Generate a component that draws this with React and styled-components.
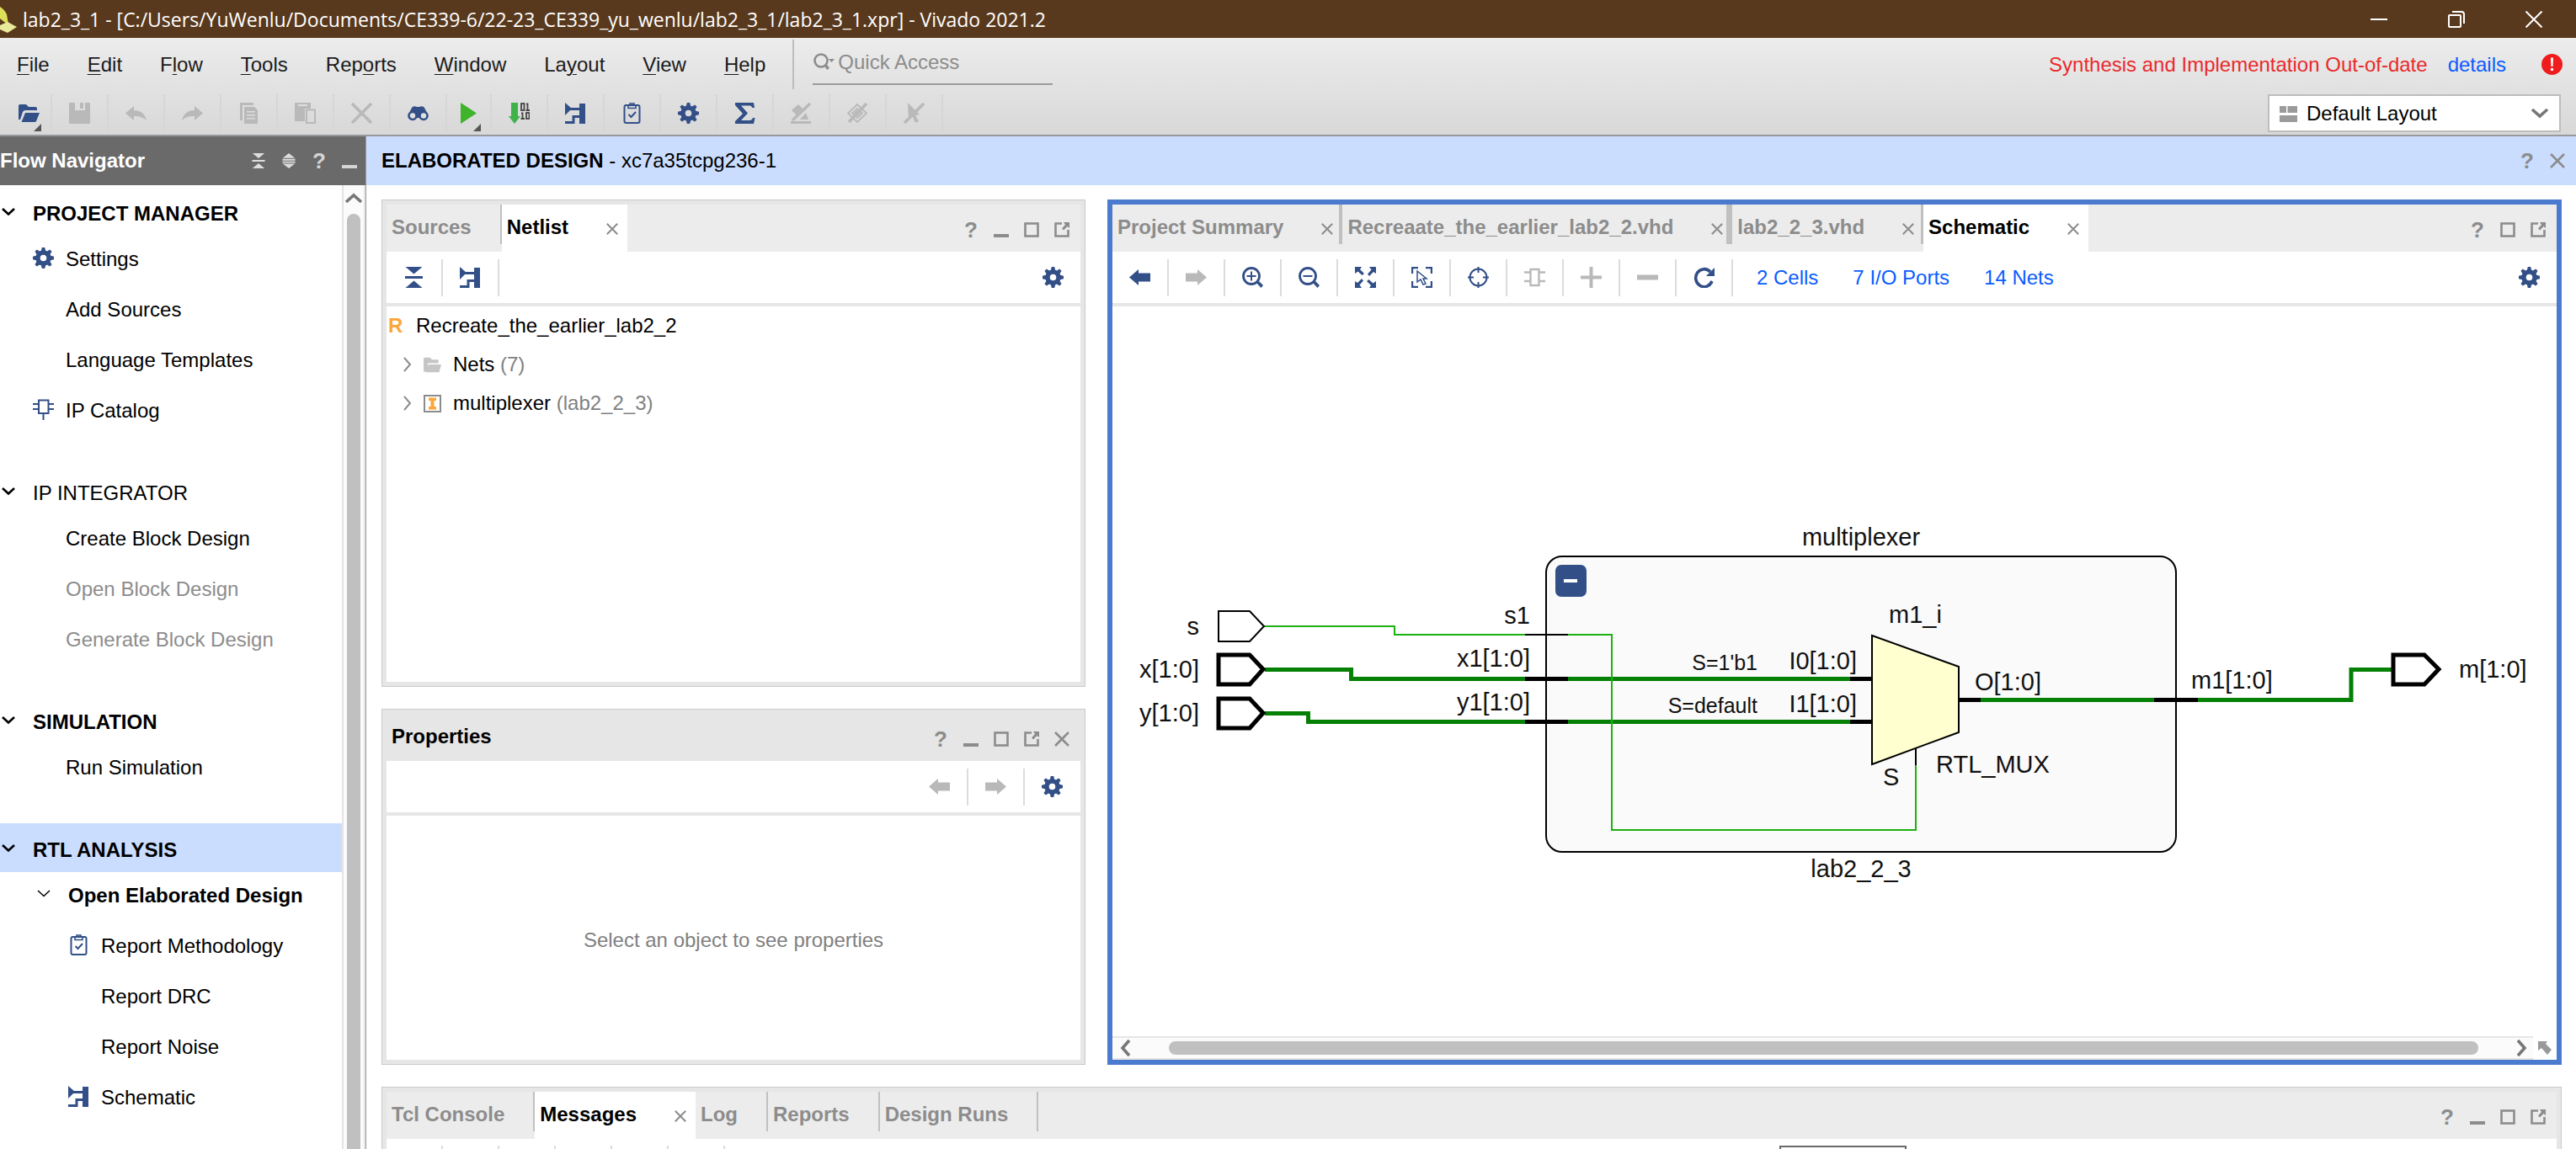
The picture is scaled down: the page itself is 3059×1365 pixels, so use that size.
import React from "react";
import styled, { createGlobalStyle, css } from "styled-components";

const navy = "#324f87";
const dim = "#b9b9b9";
const grey = "#8c8c8c";

const Global = createGlobalStyle`
  * { box-sizing: border-box; }
  body {
    margin: 0;
    overflow: hidden;
    background: #fff;
    color: #000;
    font: 24px/28px "Liberation Sans", Arial, sans-serif;
  }
  button, input, select { font: inherit; color: inherit; }
  button { border: 0; padding: 0; background: none; }
  a { text-decoration: none; }
  svg { display: block; flex: none; }
  h1, h2, ul { margin: 0; padding: 0; font-size: 24px; font-weight: normal; list-style: none; }
`;

/* ---------- icons ---------- */

const Icon = ({ children, size = 25, box = 25, height, color = navy }) => (
  <svg width={size} height={height || size} viewBox={`0 0 ${box} ${height ? height : box}`}
    fill={color} stroke={color} strokeWidth="0" aria-hidden="true">
    {children}
  </svg>
);

const Gear = () => (
  <Icon>
    <circle cx="12.5" cy="12.5" r="6.5" fill="none" strokeWidth="5.4" />
    {[0, 45, 90, 135, 180, 225, 270, 315].map((a) => (
      <path key={a} d="M9.6 5 L10.8 0 H14.2 L15.4 5 Z" transform={`rotate(${a} 12.5 12.5)`} />
    ))}
  </Icon>
);
const SchematicIcon = () => (
  <Icon>
    <path d="M0 0 L8 7 L0 15 Z M17 1 H24 V25 H17 Z" />
    <path d="M6 7.5 H18 M0 23.5 H10 V16.5 H18" fill="none" strokeWidth="3" />
  </Icon>
);
const Clipboard = () => (
  <Icon>
    <rect x="3.5" y="3" width="18" height="21" rx="2" fill="none" strokeWidth="2" />
    <path d="M8 3 V6.5 H17 V3 M10 3 V1 H15 V3" fill="none" strokeWidth="1.6" />
    <path d="M8.5 14 L11.5 17 L17 11" fill="none" strokeWidth="2" />
  </Icon>
);
const OpenFolder = ({ color }) => (
  <Icon color={color}>
    <path d="M0 20 V4 Q0 2 2 2 H9 L12 5 H20 Q22 5 22 7 V9 H8 Q6 9 5 11 L2 20 Z" />
    <path d="M8 12 H25 L21 22 Q20.500 23 19 23 H3.500 Z" />
  </Icon>
);
const Save = () => (
  <Icon color={dim}><path fillRule="evenodd" d="M0 0 H25 V25 H0 Z M7 0 V9 H19 V0 H17 V7 H13 V0 Z" /></Icon>
);
const Undo = () => (
  <Icon color={dim}><path d="M0 12.500 L10 4 V9 Q22 9 25 21 Q19 15.500 10 16 V21 Z" /></Icon>
);
const Redo = () => (
  <Icon color={dim}><path d="M25 12.500 L15 4 V9 Q3 9 0 21 Q6 15.500 15 16 V21 Z" /></Icon>
);
const Copy = () => (
  <Icon color={dim}>
    <path d="M2 0 H18 V3 H5 V21 H2 Z" />
    <path fillRule="evenodd" d="M7 5 H19 L23 9 V25 H7 Z M10 10 V11.500 H20 V10 Z M10 14 V15.500 H20 V14 Z M10 18 V19.500 H20 V18 Z" />
  </Icon>
);
const Paste = () => (
  <Icon color={dim}>
    <path fillRule="evenodd" d="M0 0 H19 V7 H12 V22 H0 Z M4 2 V4 H15 V2 Z" />
    <rect x="14" y="8.500" width="10" height="15.500" fill="none" strokeWidth="2" />
  </Icon>
);
const Delete = () => (
  <Icon color={dim}><path d="M1 1 L24 24 M24 1 L1 24" fill="none" strokeWidth="3.500" /></Icon>
);
const Binoculars = () => (
  <Icon>
    <path d="M1 14 L5 6 Q7 3 11 5 H14 Q18 3 20 6 L24 14 V18 H1 Z" />
    <circle cx="6" cy="15.500" r="4.500" fill="#e0e0e0" strokeWidth="2.600" />
    <circle cx="19" cy="15.500" r="4.500" fill="#e0e0e0" strokeWidth="2.600" />
  </Icon>
);
const Play = () => <Icon color="#3fb329"><path d="M3 0 L22 12.500 L3 25 Z" /></Icon>;
const Bitstream = () => (
  <Icon color="#3fb34a">
    <path d="M3 0 H11 V16 H14 L7 25 L0 16 H3 Z" />
    <g stroke="#444" fill="none" strokeWidth="1.800">
      <rect x="15" y="1" width="3.500" height="8" />
      <path d="M21 1.500 H22.500 V9 M20.500 9 H25" />
      <path d="M15 12.500 H16.500 V19 M14.500 19 H19" />
      <rect x="21" y="12" width="3.500" height="7" />
    </g>
  </Icon>
);
const Sigma = () => (
  <Icon><path d="M1 0 H23 L24 6 H21 Q21 3.500 18 3.500 H8 L16 12.500 L8 21 H18 Q21 21 22 18 H24.500 L23 25 H1 V22 L10 13 L1 3 Z" /></Icon>
);
const NoMark = () => (
  <Icon color={dim}>
    <path d="M9 2 L15 8 L8 16 L1 9 Z M18 12 L21 20 H11 Z M0 22 H24 V25 H0 Z" />
    <path d="M23 1 L2 21" fill="none" strokeWidth="3.500" />
  </Icon>
);
const NoHighlight = () => (
  <Icon color={dim}>
    <path d="M12 2 L23 12.500 L12 23 L1 12.500 Z M12 7 L18 12.500 L12 18 L6 12.500 Z" fill="none" strokeWidth="1.800" />
    <path d="M12 9 L16 12.500 L12 16 L8 12.500 Z" />
    <path d="M23 1 L2 23" fill="none" strokeWidth="3.500" />
  </Icon>
);
const NoSelect = () => (
  <Icon color={dim}>
    <path d="M5 0 L19 14 L14 15 L18 22 L14 24 L11 17 L6 20 Z" />
    <path d="M24 1 L1 24" fill="none" strokeWidth="3.500" />
  </Icon>
);
const Collapse = ({ color, size }) => (
  <Icon color={color} size={size}><path d="M2.500 0 H22.500 L12.500 8.500 Z M2 11 H23 V14 H2 Z M2.500 25 H22.500 L12.500 16.500 Z" /></Icon>
);
const Expand = ({ color, size }) => (
  <Icon color={color} size={size}><path d="M2.500 8 H22.500 L12.500 0 Z M2 9.500 H23 V12 H2 Z M2 13.500 H23 V16 H2 Z M2.500 17.500 H22.500 L12.500 25 Z" /></Icon>
);
const Minimise = ({ color = grey }) => <Icon color={color} size={18} box={18}><path d="M0 14 H18 V18 H0 Z" /></Icon>;
const Maximise = () => (
  <Icon color={grey} size={18} box={18}><rect x="1.500" y="1.500" width="15" height="15" fill="none" strokeWidth="2.600" /></Icon>
);
const PopOut = () => (
  <Icon color={grey} size={18} box={18}>
    <path d="M9 1.500 H1.500 V16.500 H16.500 V9" fill="none" strokeWidth="2.600" />
    <path d="M11 0 H18 V7 L15.500 5 L11 9.500 L9 7.500 L13 3 Z" />
  </Icon>
);
const Close = ({ size = 14 }) => (
  <Icon color={grey} size={size} box={14}><path d="M0.800 0.800 L13.200 13.200 M13.200 0.800 L0.800 13.200" fill="none" strokeWidth="2" /></Icon>
);
const ArrowLeft = ({ color }) => <Icon color={color}><path d="M0 12.500 L11 3 V7.500 H25 V17.500 H11 V22 Z" /></Icon>;
const ArrowRight = ({ color }) => <Icon color={color}><path d="M25 12.500 L14 3 V7.500 H0 V17.500 H14 V22 Z" /></Icon>;
const Zoom = ({ plus }) => (
  <Icon>
    <circle cx="11" cy="11" r="9.500" fill="none" strokeWidth="2.800" />
    <path d={plus ? "M5.500 11 H16.500 M11 5.500 V16.500" : "M5.500 11 H16.500"} fill="none" strokeWidth="2" />
    <path d="M17 19 L20 17 L25 22 L22.500 25 Z" />
  </Icon>
);
const Fit = () => (
  <Icon>
    {[0, 90, 180, 270].map((a) => (
      <path key={a} d="M0 0 H8 L6 3 L11 8 L8.500 10 L3.500 5.500 L0 8 Z" transform={`rotate(${a} 12.500 12.500)`} />
    ))}
  </Icon>
);
const SelectArea = () => (
  <Icon>
    <path d="M1 8 V1 H8 M17 1 H24 V8 M24 17 V24 H17 M8 24 H1 V17" fill="none" strokeWidth="2.400" />
    <path d="M7 5 L18 14 H14 L17 20 L14 21 L11 15 L7 18 Z" fill="#fff" strokeWidth="1.500" />
  </Icon>
);
const Target = () => (
  <Icon>
    <circle cx="12.500" cy="12.500" r="10" fill="none" strokeWidth="2" />
    <path d="M12.500 0 V7 M12.500 18 V25 M0 12.500 H7 M18 12.500 H25" fill="none" strokeWidth="2" />
  </Icon>
);
const Cell = () => (
  <Icon color={dim}>
    <path d="M7.500 3 H17.500 V22 H7.500 Z M0 6.500 H7 M0 17 H7 M18 6.500 H25 M18 17 H25" fill="none" strokeWidth="2.400" />
  </Icon>
);
const Plus = () => <Icon color={dim}><path d="M0 10.500 H10.500 V0 H14.500 V10.500 H25 V14.500 H14.500 V25 H10.500 V14.500 H0 Z" /></Icon>;
const Minus = () => <Icon color={dim}><path d="M0 9.500 H25 V15.500 H0 Z" /></Icon>;
const Refresh = () => (
  <Icon>
    <path d="M20 6 A10 10.500 0 1 0 22 17" fill="none" strokeWidth="3.600" />
    <path d="M25 1 V11 H15 Z" />
  </Icon>
);
const IpIcon = () => (
  <Icon>
    <path d="M7 1.500 H18.500 V17 H7 Z M0 6 H7 M0 12 H7 M18.500 6 H25 M18.500 12 H25 M12.500 17 V25" fill="none" strokeWidth="2" />
  </Icon>
);
const Chevron = ({ thin }) => (
  <Icon size={18} box={18} color="#000">
    <path d="M2 5 L9 11.500 L16 5" fill="none" strokeWidth={thin ? 1.500 : 2.600} />
  </Icon>
);
const ChevronRight = () => (
  <Icon size={18} box={18} color={grey}><path d="M5 1 L12 9 L5 17" fill="none" strokeWidth="2" /></Icon>
);
const Arrowhead = ({ turn = 0 }) => (
  <Icon size={22} box={22} color="#777">
    <path d="M2 16 L11 8 L20 16" fill="none" strokeWidth="3.600" transform={`rotate(${turn} 11 11)`} />
  </Icon>
);
const InstanceIcon = () => (
  <Icon size={21} box={21} color={grey}>
    <rect x="1" y="1" width="19" height="19" fill="#fff" strokeWidth="2" />
    <path d="M6 3.500 H15 V7 H12.500 V14 H15 V17.500 H6 V14 H8.500 V7 H6 Z" fill="#fca636" />
  </Icon>
);
const Logo = () => (
  <svg width="21" height="36" viewBox="0 0 21 36" aria-hidden="true">
    <path d="M0 3 Q5 6 8 12 L10 24 L5 21 L0 17 Z" fill="#dfe05a" />
    <path d="M0 25 L9 21 L20 27 L9 34 L0 30 Z" fill="#e9ea9a" />
  </svg>
);

/* ---------- window frame ---------- */

const Window = styled.div`
  display: flex;
  flex-direction: column;
  height: 100vh;
`;
const TitleBar = styled.header`
  flex: none;
  display: flex;
  align-items: center;
  gap: 6px;
  height: 45px;
  background: #59391d;
  color: #fff;
`;
const Title = styled.h1`
  flex: 1;
  font: 23px/30px "Open Sans", "Noto Sans", sans-serif;
`;
const WindowControls = styled.div`
  display: flex;
  gap: 70px;
  padding-right: 38px;
  button { width: 22px; height: 22px; }
`;
const TopBars = styled.div`
  flex: none;
  height: 117px;
  border-bottom: 2px solid #95999b;
  background: linear-gradient(#ececec, #d8d8d8);
`;
const MenuRow = styled.div`
  display: flex;
  align-items: center;
  height: 63px;
  padding: 0 16px 0 20px;
`;
const Menu = styled.nav`
  display: flex;
  gap: 45px;
  padding-right: 32px;
  color: #1a1a1a;
  u { text-decoration-thickness: 1px; text-underline-offset: 3px; }
`;
const MenuDivider = styled.span`
  align-self: stretch;
  width: 2px;
  margin: 2px 22px 2px 0;
  background: #bdbdbd;
`;
const Search = styled.label`
  display: flex;
  align-items: center;
  gap: 4px;
  width: 285px;
  height: 48px;
  padding-bottom: 4px;
  border-bottom: 2px solid #9b9b9b;
  input {
    width: 240px;
    border: 0;
    padding: 0;
    outline: 0;
    background: none;
  }
  input::placeholder { color: ${grey}; opacity: 1; }
`;
const Status = styled.div`
  display: flex;
  align-items: center;
  gap: 24px;
  margin-left: auto;
  color: #ea2a2a;
  svg { margin-left: 18px; }
`;
const Link = styled.a`color: #0a5cff;`;

const ToolRow = styled.div`
  display: flex;
  height: 50px;
  padding: 4px 18px 0 0;
`;
const Tool = styled.button`
  position: relative;
  display: flex;
  align-items: center;
  justify-content: center;
  width: ${(p) => p.$width || 67}px;
  height: 44px;
  padding-left: ${(p) => p.$pad || 0}px;
  border-right: 2px solid ${(p) => p.$line || "#d6d6d6"};
`;
const Corner = styled.span`
  position: absolute;
  right: 11px;
  bottom: 0;
  border-left: 9px solid transparent;
  border-bottom: 9px solid #555;
`;
const LayoutPicker = styled.label`
  position: relative;
  display: flex;
  align-items: center;
  width: 348px;
  height: 45px;
  margin-left: auto;
  select {
    width: 100%;
    height: 100%;
    padding: 0 0 0 44px;
    border: 2px solid #bdbdbd;
    border-radius: 0;
    background: #fff;
    color: #000;
    appearance: none;
  }
  svg { position: absolute; left: 14px; pointer-events: none; }
  svg:last-child { left: auto; right: 14px; }
`;

const Body = styled.div`
  flex: 1;
  display: flex;
  min-height: 0;
`;

/* ---------- flow navigator ---------- */

const Sidebar = styled.aside`
  flex: none;
  display: flex;
  flex-direction: column;
  width: 435px;
  border-right: 1px solid #999;
`;
const SidebarHead = styled.div`
  flex: none;
  display: flex;
  align-items: center;
  gap: 18px;
  height: 58px;
  padding-right: 10px;
  background: #6a6a6a;
  color: #fff;
  h2 { flex: 1; font-weight: bold; }
`;
const HelpButton = styled.button`
  width: 18px;
  font-weight: bold;
  font-size: 26px;
  color: ${(p) => p.$color || grey};
`;
const SidebarBody = styled.div`
  flex: 1;
  display: flex;
  min-height: 0;
  overflow: hidden;
`;
const Tree = styled.nav`flex: 1; padding-top: 2px;`;
const Section = styled.section`margin-bottom: 34px;`;
const row = css`
  display: flex;
  align-items: center;
  width: 100%;
  text-align: left;
  svg { margin-bottom: 4px; }
`;
const SectionHead = styled.button`
  ${row}
  height: 58px;
  gap: 20px;
  padding: 6px 0 0 1px;
  font-weight: ${(p) => (p.$bold ? "bold" : "normal")};
  background: ${(p) => (p.$active ? "#cbddff" : "none")};
`;
const Item = styled.button`
  ${row}
  height: 60px;
  padding: 0 0 4px ${(p) => (p.$deep ? 81 : 39)}px;
  color: ${(p) => (p.disabled ? grey : "#000")};
`;
const IconSlot = styled.span`
  display: flex;
  width: 39px;
`;
const SubHead = styled.button`
  ${row}
  height: 60px;
  gap: 20px;
  padding: 0 0 4px 43px;
  font-weight: bold;
`;
const VScroll = styled.div`
  display: flex;
  flex-direction: column;
  align-items: center;
  width: 28px;
  padding-top: 4px;
  border: solid #e4e4e4;
  border-width: 0 2px;
  background: #fbfbfb;
  &::after {
    content: "";
    flex: 1;
    width: 16px;
    margin-top: 8px;
    border-radius: 8px 8px 0 0;
    background: #c0c0c0;
  }
`;

/* ---------- work area ---------- */

const Main = styled.main`
  flex: 1;
  display: flex;
  flex-direction: column;
  min-width: 0;
`;
const DesignHead = styled.div`
  flex: none;
  display: flex;
  align-items: center;
  gap: 18px;
  height: 58px;
  padding: 0 13px 0 18px;
  background: #cbddff;
  h2 { flex: 1; }
`;
const Workspace = styled.div`
  flex: 1;
  display: flex;
  flex-direction: column;
  gap: 26px;
  min-height: 0;
  padding: 17px 17px 0 18px;
`;
const Upper = styled.div`
  flex: 1;
  display: grid;
  grid-template-columns: 836fr 1727fr;
  gap: 26px;
  min-height: 0;
`;
const LeftColumn = styled.div`
  display: grid;
  grid-template-rows: 579fr 423fr;
  gap: 26px;
  min-height: 0;
`;
const Panel = styled.section`
  display: flex;
  flex-direction: column;
  min-width: 0;
  min-height: 0;
  padding: 5px;
  border: 1px solid #cacaca;
  background: #e6e6e6;
  ${(p) => p.$focused && css`padding: 0; border: 6px solid #4a7bce;`}
`;
const BottomPanel = styled(Panel)`
  flex: none;
  height: 74px;
  padding-bottom: 0;
  border-bottom: 0;
  overflow: hidden;
`;
const TabBar = styled.div`
  flex: none;
  display: flex;
  height: ${(p) => p.$height || 56}px;
  background: ${(p) => p.$bg || "#ececec"};
`;
const Tab = styled.div`
  display: flex;
  align-items: center;
  gap: 45px;
  padding: 0 ${(p) => p.$right}px 0 6px;
  background: ${(p) => (p.$active ? "#fff" : "none")};
  color: ${(p) => (p.$active ? "#000" : grey)};
  button { font-weight: bold; white-space: nowrap; padding-bottom: 2px; }
  button + button { padding: 2px 0 0; }
`;
const TabLine = styled.span`
  width: ${(p) => p.$width}px;
  height: 47px;
  background: #c0c0c0;
`;
const PanelTitle = styled.h2`
  padding: 13px 0 0 6px;
  font-weight: bold;
`;
const PanelControls = styled.div`
  display: flex;
  align-items: center;
  gap: 18px;
  margin-left: auto;
  padding: 4px 13px 0 0;
`;
const PanelTools = styled.div`
  flex: none;
  display: flex;
  align-items: center;
  height: ${(p) => p.$height || 65}px;
  padding-right: 20px;
  border-bottom: 4px solid #e6e6e6;
  background: #fff;
`;
const Push = styled.span`margin-left: auto;`;
const Counts = styled.div`
  display: flex;
  gap: 41px;
  padding-left: 28px;
`;
const PanelBody = styled.div`
  flex: 1;
  min-height: 0;
  background: #fff;
`;
const Centered = styled(PanelBody)`
  display: flex;
  align-items: center;
  justify-content: center;
  padding-top: 6px;
  color: #808080;
`;
const NetRow = styled.li`
  display: flex;
  align-items: center;
  height: 46px;
  gap: ${(p) => (p.$root ? 18 : 14)}px;
  padding-left: ${(p) => (p.$root ? 2 : 16)}px;
  span { color: #808080; }
  svg + svg { margin-left: -4px; }
`;
const RootMark = styled.b`
  width: 15px;
  color: #fca636;
`;
const HScroll = styled.div`
  flex: none;
  display: flex;
  align-items: center;
  height: 28px;
  background: #fff;
`;
const HTrack = styled.div`
  flex: 1;
  display: flex;
  align-items: center;
  height: 28px;
  padding: 0 2px 0 4px;
  border: solid #e6e6e6;
  border-width: 2px 0;
  background: #fbfbfb;
  &::before {
    content: "";
    order: 1;
    flex: 1;
    height: 16px;
    margin: 0 41px;
    border-radius: 8px;
    background: #c0c0c0;
  }
  svg:last-child { order: 2; }
`;
const ResizeMark = styled.span`
  display: flex;
  justify-content: center;
  width: 28px;
`;
const MessageTools = styled.div`
  flex: none;
  display: flex;
  height: 61px;
  padding-top: 8px;
  background: #fff;
`;
const FilterBox = styled.input`
  width: 151px;
  height: 44px;
  margin: 0 772px 0 auto;
  border: 2px solid #6a6a6a;
`;
const Drawing = styled.svg`
  width: 100%;
  height: 100%;
  text { font: 29px "Liberation Sans", Arial, sans-serif; fill: #111; }
  text.small { font-size: 25px; }
  .net { fill: none; stroke: #1cb010; stroke-width: 2; }
  .bus { fill: none; stroke: #048004; stroke-width: 5; }
  .pin { fill: none; stroke: #000; stroke-width: 5; }
  .wire { fill: none; stroke: #000; stroke-width: 2; }
`;

const Schematic = () => (
  <Drawing viewBox="1321 364 1715 867" role="img" aria-label="Schematic of multiplexer">
    <rect x="1836" y="661" width="748" height="351" rx="19" fill="#fafafa" stroke="#000" strokeWidth="2" />
    <path className="bus" d="M1502 795.500 H1604.500 V806.500 H2198 M1502 847.500 H1553.500 V857.500 H2198 M2350 831.500 H2792 V795.500 H2841" />
    <path className="net" d="M1501 744 H1656 V754 H1914 V986 H2275 V909" />
    <path className="pin" d="M1811 806.500 H1862 M1811 857.500 H1862 M2197 806.500 H2223 M2197 857.500 H2223 M2326 831.500 H2352 M2558 831.500 H2610" />
    <path className="wire" d="M1811 754 H1862 M2275 888 V909" />
    <path d="M2223 755 L2326 792 V870 L2223 908 Z" fill="#ffffcf" stroke="#000" strokeWidth="2" />
    <path className="wire" d="M1447 726 H1484 L1501 744 L1484 762 H1447 Z" />
    {[795, 847].map((y) => (
      <path key={y} className="pin" d={`M1447 ${y - 17} H1484 L1500 ${y} L1484 ${y + 18} H1447 Z`} />
    ))}
    <path className="pin" d="M2842 778 H2879 L2896 795 L2879 813 H2842 Z" />
    <rect x="1847" y="671" width="37" height="38" rx="7" fill={navy} />
    <rect x="1857" y="688" width="16" height="4" fill="#fff" />
    <g textAnchor="end">
      <text x="1424" y="754">s</text>
      <text x="1424" y="805">x[1:0]</text>
      <text x="1424" y="857">y[1:0]</text>
      <text x="1817" y="741">s1</text>
      <text x="1817" y="792">x1[1:0]</text>
      <text x="1817" y="844">y1[1:0]</text>
      <text x="2087" y="796" className="small">S=1'b1</text>
      <text x="2087" y="847" className="small">S=default</text>
      <text x="2205" y="795">I0[1:0]</text>
      <text x="2205" y="846">I1[1:0]</text>
    </g>
    <g textAnchor="middle">
      <text x="2210" y="648">multiplexer</text>
      <text x="2210" y="1042">lab2_2_3</text>
    </g>
    <text x="2243" y="740">m1_i</text>
    <text x="2345" y="820">O[1:0]</text>
    <text x="2602" y="818">m1[1:0]</text>
    <text x="2920" y="805">m[1:0]</text>
    <text x="2299" y="918">RTL_MUX</text>
    <text x="2236" y="933">S</text>
  </Drawing>
);

const Ctl = ({ label, children }) => <button aria-label={label}>{children}</button>;

const Controls = ({ minimise, close }) => (
  <PanelControls>
    <HelpButton aria-label="Help">?</HelpButton>
    {minimise && <Ctl label="Minimize"><Minimise /></Ctl>}
    <Ctl label="Maximize"><Maximise /></Ctl>
    <Ctl label="Float"><PopOut /></Ctl>
    {close && <Ctl label="Close"><Close size={18} /></Ctl>}
  </PanelControls>
);

const Tabs = ({ items }) =>
  items.map(({ name, active, closable, line = 0 }) => (
    <React.Fragment key={name}>
      <Tab $active={active} $right={closable || active ? 11 - line : 34}>
        <button role="tab" aria-selected={!!active}>{name}</button>
        {(closable || active) && <Ctl label={`Close ${name}`}><Close /></Ctl>}
      </Tab>
      {line > 0 && <TabLine $width={line} />}
    </React.Fragment>
  ));

const menus = [["", "F", "ile"], ["", "E", "dit"], ["F", "l", "ow"], ["", "T", "ools"], ["Rep", "o", "rts"],
  ["", "W", "indow"], ["La", "y", "out"], ["", "V", "iew"], ["", "H", "elp"]];

const mainTools = [
  ["Save", <Save />], ["Undo", <Undo />], ["Redo", <Redo />], ["Copy", <Copy />], ["Paste", <Paste />],
  ["Delete", <Delete />], ["Find", <Binoculars />], ["Run", <Play />, 53, true], ["Generate Bitstream", <Bitstream />],
  ["Schematic", <SchematicIcon />], ["Report Methodology", <Clipboard />], ["Settings", <Gear />],
  ["Project Summary", <Sigma />], ["Unmark", <NoMark />], ["Unhighlight", <NoHighlight />], ["Unselect", <NoSelect />],
];

const schematicTools = [
  ["Previous", <ArrowLeft />], ["Next", <ArrowRight color={dim} />], ["Zoom In", <Zoom plus />], ["Zoom Out", <Zoom />],
  ["Zoom Fit", <Fit />], ["Select Area", <SelectArea />], ["Autofit Selection", <Target />], ["Expand Cell", <Cell />],
  ["Add", <Plus />], ["Remove", <Minus />], ["Regenerate", <Refresh />],
];

const NavItem = ({ icon, children, ...rest }) => (
  <Item {...rest}><IconSlot>{icon}</IconSlot>{children}</Item>
);

export default function App() {
  return (
    <Window>
      <Global />
      <TitleBar>
        <Logo />
        <Title>lab2_3_1 - [C:/Users/YuWenlu/Documents/CE339-6/22-23_CE339_yu_wenlu/lab2_3_1/lab2_3_1.xpr] - Vivado 2021.2</Title>
        <WindowControls>
          <Ctl label="Minimize window"><Icon size={20} box={20} color="#fff"><path d="M0 9 H20 V11 H0 Z" /></Icon></Ctl>
          <Ctl label="Restore window">
            <Icon size={20} box={20} color="#fff">
              <path d="M1 6 Q1 5 2 5 H14 Q15 5 15 6 V18 Q15 19 14 19 H2 Q1 19 1 18 Z M5 1 H16 Q19 1 19 4 V15" fill="none" strokeWidth="2" />
            </Icon>
          </Ctl>
          <Ctl label="Close window"><Icon size={20} box={20} color="#fff"><path d="M0.500 0.500 L19.500 19.500 M19.500 0.500 L0.500 19.500" fill="none" strokeWidth="2" /></Icon></Ctl>
        </WindowControls>
      </TitleBar>

      <TopBars>
        <MenuRow>
          <Menu>
            {menus.map(([a, b, c]) => <button key={a + b + c}>{a}<u>{b}</u>{c}</button>)}
          </Menu>
          <MenuDivider />
          <Search>
            <Icon size={26} box={26} color={grey}>
              <circle cx="10" cy="11" r="7.500" fill="none" strokeWidth="2.600" />
              <path d="M14 17 L17 15.500 L20 20 L17 22 Z M19 9 H26 L22.500 13 Z" />
            </Icon>
            <input placeholder="Quick Access" aria-label="Quick Access" />
          </Search>
          <Status>
            Synthesis and Implementation Out-of-date
            <Link href="#details">details</Link>
            <Icon color="#ee1c1c">
              <circle cx="12.500" cy="12.500" r="12.500" />
              <path d="M11 4.500 H14 L13.500 15 H11.500 Z M11 17 H14 V20 H11 Z" fill="#fff" />
            </Icon>
          </Status>
        </MenuRow>
        <ToolRow>
          <Tool aria-label="Open" $width={62} $pad={8}><OpenFolder /><Corner /></Tool>
          {mainTools.map(([label, icon, width, corner]) => (
            <Tool key={label} aria-label={label} $width={width}>{icon}{corner && <Corner />}</Tool>
          ))}
          <LayoutPicker>
            <Icon size={21} box={21} color="#9b9b9b"><path d="M0 2 H8 V10 H0 Z M9.500 2 H21 V10 H9.500 Z M0 13 H21 V21 H0 Z" /></Icon>
            <select aria-label="Layout"><option>Default Layout</option></select>
            <Arrowhead turn={180} />
          </LayoutPicker>
        </ToolRow>
      </TopBars>

      <Body>
        <Sidebar>
          <SidebarHead>
            <h2>Flow Navigator</h2>
            <Ctl label="Collapse All"><Collapse color="#ddd" size={18} /></Ctl>
            <Ctl label="Expand All"><Expand color="#ddd" size={18} /></Ctl>
            <HelpButton aria-label="Help" $color="#d4d4d4">?</HelpButton>
            <Ctl label="Minimize"><Minimise color="#d4d4d4" /></Ctl>
          </SidebarHead>
          <SidebarBody>
            <Tree>
              <Section>
                <SectionHead $bold><Chevron />PROJECT MANAGER</SectionHead>
                <NavItem icon={<Gear />}>Settings</NavItem>
                <NavItem>Add Sources</NavItem>
                <NavItem>Language Templates</NavItem>
                <NavItem icon={<IpIcon />}>IP Catalog</NavItem>
              </Section>
              <Section>
                <SectionHead><Chevron />IP INTEGRATOR</SectionHead>
                <NavItem>Create Block Design</NavItem>
                <NavItem disabled>Open Block Design</NavItem>
                <NavItem disabled>Generate Block Design</NavItem>
              </Section>
              <Section>
                <SectionHead $bold><Chevron />SIMULATION</SectionHead>
                <NavItem>Run Simulation</NavItem>
              </Section>
              <Section>
                <SectionHead $bold $active><Chevron />RTL ANALYSIS</SectionHead>
                <SubHead><Chevron thin />Open Elaborated Design</SubHead>
                <NavItem $deep icon={<Clipboard />}>Report Methodology</NavItem>
                <NavItem $deep>Report DRC</NavItem>
                <NavItem $deep>Report Noise</NavItem>
                <NavItem $deep icon={<SchematicIcon />}>Schematic</NavItem>
              </Section>
            </Tree>
            <VScroll><Arrowhead /></VScroll>
          </SidebarBody>
        </Sidebar>

        <Main>
          <DesignHead>
            <h2><b>ELABORATED DESIGN</b> - xc7a35tcpg236-1</h2>
            <HelpButton aria-label="Help">?</HelpButton>
            <Ctl label="Close design"><Close size={18} /></Ctl>
          </DesignHead>
          <Workspace>
            <Upper>
              <LeftColumn>
                <Panel>
                  <TabBar>
                    <Tabs items={[{ name: "Sources", line: 2 }, { name: "Netlist", active: true }]} />
                    <Controls minimise />
                  </TabBar>
                  <PanelTools>
                    <Tool $line="#dcdcdc" aria-label="Collapse All"><Collapse /></Tool>
                    <Tool $line="#dcdcdc" aria-label="Schematic"><SchematicIcon /></Tool>
                    <Push /><Ctl label="Netlist settings"><Gear /></Ctl>
                  </PanelTools>
                  <PanelBody>
                    <ul>
                      <NetRow $root><RootMark>R</RootMark>Recreate_the_earlier_lab2_2</NetRow>
                      <NetRow><ChevronRight /><Icon size={21} color="#c6c6c6"><path d="M0 22 V4 Q0 2 2 2 H9 L12 5 H21 V10 H6 V22 Z M7 12 H25 L22 23 H3 Z" /></Icon><div>Nets <span>(7)</span></div></NetRow>
                      <NetRow><ChevronRight /><InstanceIcon /><div>multiplexer <span>(lab2_2_3)</span></div></NetRow>
                    </ul>
                  </PanelBody>
                </Panel>
                <Panel>
                  <TabBar $bg="#e6e6e6">
                    <PanelTitle>Properties</PanelTitle>
                    <Controls minimise close />
                  </TabBar>
                  <PanelTools>
                    <Push />
                    <Tool $line="#dcdcdc" aria-label="Back"><ArrowLeft color={dim} /></Tool>
                    <Tool $line="#dcdcdc" aria-label="Forward"><ArrowRight color={dim} /></Tool>
                    <Tool $line="transparent" $width={46} $pad={20} aria-label="Properties settings"><Gear /></Tool>
                  </PanelTools>
                  <Centered>Select an object to see properties</Centered>
                </Panel>
              </LeftColumn>

              <Panel $focused>
                <TabBar>
                  <Tabs items={[
                    { name: "Project Summary", closable: true, line: 4 },
                    { name: "Recreaate_the_earlier_lab2_2.vhd", closable: true, line: 7 },
                    { name: "lab2_2_3.vhd", closable: true, line: 3 },
                    { name: "Schematic", active: true },
                  ]} />
                  <Controls />
                </TabBar>
                <PanelTools>
                  {schematicTools.map(([label, icon]) => (
                    <Tool key={label} $line="#dcdcdc" aria-label={label}>{icon}</Tool>
                  ))}
                  <Counts>
                    <Link href="#cells">2 Cells</Link>
                    <Link href="#ports">7 I/O Ports</Link>
                    <Link href="#nets">14 Nets</Link>
                  </Counts>
                  <Push /><Ctl label="Schematic settings"><Gear /></Ctl>
                </PanelTools>
                <PanelBody><Schematic /></PanelBody>
                <HScroll>
                  <HTrack><Arrowhead turn={-90} /><Arrowhead turn={90} /></HTrack>
                  <ResizeMark>
                    <Icon size={16} box={16} color="#999"><path d="M0 0 H11 L9 3 L16 10 L11 16 L4 8 L0 11 Z" /></Icon>
                  </ResizeMark>
                </HScroll>
              </Panel>
            </Upper>

            <BottomPanel>
              <TabBar>
                <Tabs items={[
                  { name: "Tcl Console", line: 2 },
                  { name: "Messages", active: true },
                  { name: "Log", line: 2 },
                  { name: "Reports", line: 2 },
                  { name: "Design Runs", line: 2 },
                ]} />
                <Controls minimise />
              </TabBar>
              <MessageTools>
                {["Search", "Collapse", "Expand", "Filter", "Group", "Save log"].map((label) => (
                  <Tool key={label} $line="#dcdcdc" aria-label={label} />
                ))}
                <FilterBox aria-label="Message filter" />
              </MessageTools>
            </BottomPanel>
          </Workspace>
        </Main>
      </Body>
    </Window>
  );
}
